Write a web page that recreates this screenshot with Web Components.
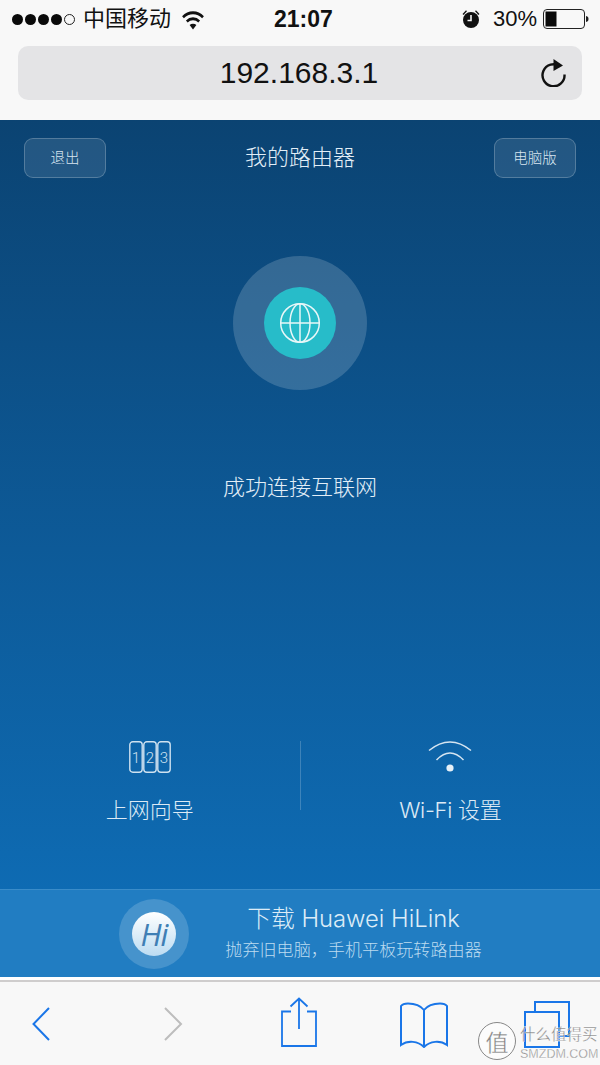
<!DOCTYPE html>
<html lang="zh-CN">
<head>
<meta charset="utf-8">
<title>我的路由器</title>
<style>
html,body{margin:0;padding:0;background:#f7f7f7}
body{width:600px;height:1065px;overflow:hidden;font-family:"Liberation Sans","Noto Sans CJK SC",sans-serif}
</style>
</head>
<body>
<phone-app></phone-app>
<script>
function def(name, html){
  customElements.define(name, class extends HTMLElement{
    constructor(){super();this.attachShadow({mode:'open'}).innerHTML=html;}
  });
}
def('status-bar',`<style>
:host{display:flex;align-items:center;height:38px;padding:0 10px 0 12px;color:#111;font-size:22px;line-height:38px;position:relative}
.dots{display:flex;gap:2px;margin-right:8px}
.dots i{width:11px;height:11px;border-radius:50%;background:#0a0a0a;box-sizing:border-box}
.dots i:last-child{background:none;border:1px solid #222}
.wifi{margin-left:11px;margin-top:2px}
.time{margin-left:70px;font-weight:700;font-size:23px;width:188px}
.alarm{margin-right:13px}
.bat{margin-left:6px}
</style>
<div class="dots"><i></i><i></i><i></i><i></i><i></i></div>
<span>中国移动</span>
<svg class="wifi" width="22" height="20" viewBox="0 0 22 18" preserveAspectRatio="none"><path d="M1 6.500a14.500 14.500 0 0 1 20 0" fill="none" stroke="#111" stroke-width="2.600"/><path d="M4.800 10.300a9.200 9.200 0 0 1 12.400 0" fill="none" stroke="#111" stroke-width="2.600"/><path d="M11 17.500 7.600 13.600a5 5 0 0 1 6.800 0z" fill="#111"/></svg>
<span class="time">21:07</span>
<svg class="alarm" width="18" height="20" viewBox="0 0 18 20"><path d="M1 5.500 4.500 1.800M17 5.500 13.500 1.800" stroke="#111" stroke-width="1.300" fill="none"/><circle cx="9" cy="11" r="8" fill="#111"/><path d="M9 6v5.500H5.500" stroke="#f7f7f7" stroke-width="1.600" fill="none"/></svg>
<span>30%</span>
<svg class="bat" width="46" height="20" viewBox="0 0 46 20"><rect x=".5" y=".5" width="41" height="19" rx="3.500" fill="none" stroke="#222"/><rect x="2.500" y="2.500" width="11" height="15" fill="#0a0a0a"/><path d="M43 7c2 .3 2.500 1.500 2.500 3s-.5 2.700-2.500 3z" fill="#222"/></svg>`);

def('url-bar',`<style>
:host{display:block;padding:8px 18px 20px}
.f{display:flex;align-items:center;justify-content:center;height:54px;background:#e4e4e6;border-radius:10px;position:relative;font-size:30px;color:#111}
span{margin-left:-2px}
svg{position:absolute;right:15px;top:13px}
</style><div class="f"><span>192.168.3.1</span>
<svg width="27" height="28" viewBox="0 0 27 28"><path d="M20.500 7.400A11 11 0 1 0 25 15.500" fill="none" stroke="#111" stroke-width="2.400" transform="translate(-.5 0)"/><path d="M13.500 0 23 6.500 13.500 12z" fill="#111"/></svg></div>`);

def('top-chrome',`<style>:host{display:block;height:120px;background:#f8f8f8}</style><status-bar></status-bar><url-bar></url-bar>`);

def('ghost-button',`<style>
:host{display:flex;align-items:center;justify-content:center;width:82px;height:40px;box-sizing:border-box;border:1px solid rgba(255,255,255,.22);border-radius:9px;background:rgba(255,255,255,.1);color:#d9e6f1;font-size:14.500px;font-weight:300}
</style><slot></slot>`);

def('page-header',`<style>
:host{display:flex;align-items:center;justify-content:space-between;padding:18px 24px 0;color:#e2eef7;font-size:22px;font-weight:300;line-height:40px}
</style><ghost-button>退出</ghost-button><span>我的路由器</span><ghost-button>电脑版</ghost-button>`);

def('net-status',`<style>
:host{display:flex;flex-direction:column;align-items:center;padding-top:78px;color:#e2eef7;font-size:22px;font-weight:300}
.o{width:134px;height:134px;border-radius:50%;background:rgba(255,255,255,.17);display:flex;align-items:center;justify-content:center}
.i{width:72px;height:72px;border-radius:50%;background:#27bcc9;display:flex;align-items:center;justify-content:center}
p{margin:82px 0 0;line-height:32px}
</style><div class="o"><div class="i">
<svg width="42" height="42" viewBox="0 0 42 42" fill="none" stroke="#e8f7f8" stroke-width="1.500"><circle cx="21" cy="21" r="19.300"/><ellipse cx="21" cy="21" rx="10" ry="19.300"/><path d="M21 1.700v38.600M1.700 21h38.600"/></svg>
</div></div><p>成功连接互联网</p>`);

def('quick-actions',`<style>
:host{display:flex;align-items:flex-start;margin-top:auto;color:#dceaf5;font-size:22px;font-weight:300;height:148px}
.c{flex:1;display:flex;flex-direction:column;align-items:center}
.s{width:1px;height:69px;background:rgba(255,255,255,.2)}
.ic{height:34px;display:flex;align-items:flex-start}
span{margin-top:19px;line-height:32px;font-family:Inter,"Noto Sans CJK SC",sans-serif;letter-spacing:-.3px}
svg{overflow:visible}
svg text{font:300 15px Roboto,sans-serif;fill:#cfe2f0;text-anchor:middle}
</style>
<div class="c"><div class="ic"><svg width="42" height="32" viewBox="0 0 42 32" fill="none" stroke="#cfe2f0" stroke-width="1.400"><rect x=".8" y=".8" width="12.400" height="30.400" rx="3"/><rect x="14.800" y=".8" width="12.400" height="30.400" rx="3"/><rect x="28.800" y=".8" width="12.400" height="30.400" rx="3"/><text x="7" y="21.500" stroke="none">1</text><text x="21" y="21.500" stroke="none">2</text><text x="35" y="21.500" stroke="none">3</text></svg></div><span style="letter-spacing:0">上网向导</span></div>
<div class="s"></div>
<div class="c"><div class="ic"><svg width="44" height="32" viewBox="0 0 44 32" fill="none" stroke="#d6e5f1" stroke-width="1.500"><path d="M1 9.500Q22 -7.500 43 9.500"/><path d="M8.500 19Q22 5 35.500 19"/><circle cx="22" cy="27" r="3.600" fill="#e6f0f7" stroke="none"/></svg></div><span>Wi-Fi 设置</span></div>`);

def('download-banner',`<style>
:host{display:flex;align-items:center;height:88px;box-sizing:border-box;background:#217dc2;border-top:1px solid #3a8cc9;padding-left:119px;color:#dcecf7}
.o{width:70px;height:70px;border-radius:50%;background:rgba(255,255,255,.17);display:flex;align-items:center;justify-content:center;flex:none}
.i{width:44px;height:44px;border-radius:50%;background:linear-gradient(180deg,#fff,#bcdcf2);display:flex;align-items:center;justify-content:center;font:italic 400 31px "Open Sans",sans-serif;color:#3f7fb5;letter-spacing:-1px}
.t{margin-left:36px;width:257px;text-align:center}
.a{font-family:Inter,"Noto Sans CJK SC",sans-serif;font-size:23.800px;line-height:30px;font-weight:300;white-space:nowrap}
.b{font-size:17.100px;line-height:26px;font-weight:300;color:#bcdbf0;margin-top:4px;white-space:nowrap}
</style><div class="o"><div class="i">Hi</div></div><div class="t"><div class="a">下载 Huawei HiLink</div><div class="b">抛弃旧电脑，手机平板玩转路由器</div></div>`);

def('router-page',`<style>
:host{display:flex;flex-direction:column;height:857px;background:linear-gradient(180deg,#0b4372 0%,#0d5a98 50%,#0e6bb3 90%,#0e6cb4 100%)}
</style><page-header></page-header><net-status></net-status><quick-actions></quick-actions><download-banner></download-banner>`);

def('safari-toolbar',`<style>
:host{display:flex;align-items:flex-start;height:88px;box-sizing:border-box;background:#f8f8f8;position:relative;border-top:3px solid #fff}
.line{position:absolute;left:0;right:0;top:0;height:2px;background:#cfcdcd}
.r{display:flex;align-items:flex-start;padding:17px 0 0 32px}
svg{flex:none;fill:none;stroke:#1a76e8;stroke-width:1.800;display:block}
.wm{position:absolute;left:478px;top:42px;width:122px;height:40px;color:rgba(110,110,110,.85);-webkit-text-stroke:.3px #fff;font-family:"Noto Sans CJK SC",sans-serif}
.wm .c{position:absolute;left:0;top:0;width:36px;height:36px;border-radius:50%;border:1px solid #888;background:rgba(255,255,255,.5);display:flex;align-items:center;justify-content:center;font-size:23px;box-sizing:content-box}
.wm .x{position:absolute;left:42px;top:-.5px;font-size:15.500px;line-height:22px;white-space:nowrap}
.wm .y{position:absolute;left:42px;top:24px;font:12.500px/16px "Liberation Sans",sans-serif;white-space:nowrap}
</style><div class="line"></div>
<div class="r">
<svg style="margin-top:10px" width="18" height="34" viewBox="0 0 18 34"><path d="M17 1 1.500 17 17 33" stroke-width="2"/></svg>
<svg style="margin:10px 0 0 113px;stroke:#bdbdbd" width="20" height="34" viewBox="0 0 20 34"><path d="M2 1 18 17 2 33" stroke-width="2"/></svg>
<svg style="margin-left:98px" width="36" height="50" viewBox="0 0 36 50"><path d="M10 14.500H1V49H35V14.500H26"/><path d="M18 1.500V32M9.500 9.500 18 1.500 26.500 9.500"/></svg>
<svg style="margin:5px 0 0 83px" width="48" height="46" viewBox="0 0 48 46"><path d="M24 8C20 3 14 1.500 8 1.500 5 1.500 2.500 2 1 4V43C8 38 18 39 24 45 30 39 40 38 47 43V4C45.500 2 43 1.500 40 1.500 34 1.500 28 3 24 8ZM24 8V45" stroke-width="2"/></svg>
<svg style="margin:4px 0 0 76px" width="46" height="48" viewBox="0 0 46 48"><path d="M11 11V1H45V35H35" stroke-width="2"/><rect x="1" y="11" width="34" height="35" stroke-width="2"/></svg>
</div>
<div class="wm"><div class="c">值</div><div class="x">什么值得买</div><div class="y">SMZDM.COM</div></div>`);

def('phone-app',`<style>:host{display:flex;flex-direction:column;width:600px;height:1065px}</style><top-chrome></top-chrome><router-page></router-page><safari-toolbar></safari-toolbar>`);
</script>
</body>
</html>
